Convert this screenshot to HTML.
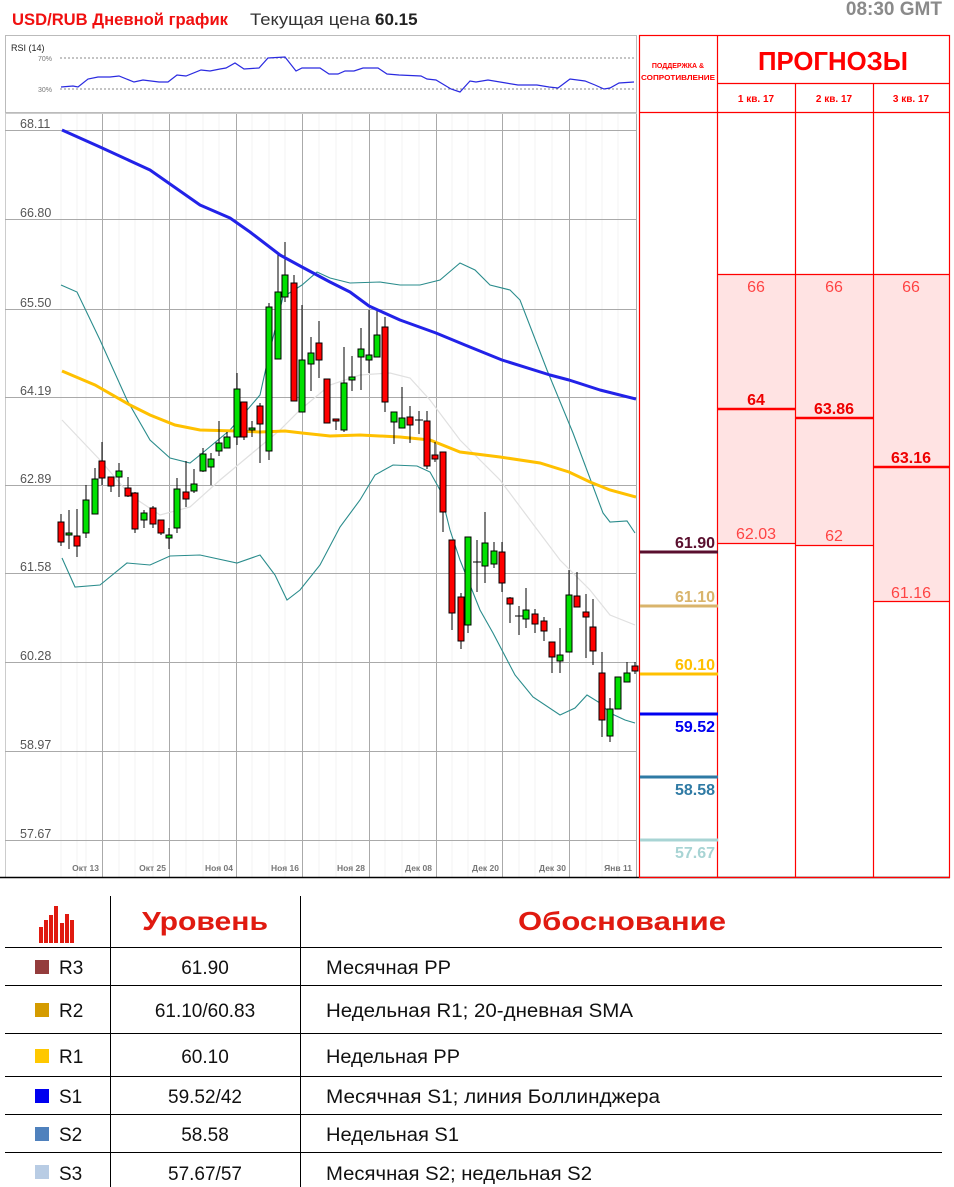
<!DOCTYPE html>
<html><head><meta charset="utf-8"><style>
body{margin:0;background:#fff;width:954px;height:1187px;overflow:hidden}
svg{display:block;font-family:"Liberation Sans","Noto Sans CJK SC",sans-serif}
</style></head><body>
<svg width="954" height="1187" viewBox="0 0 954 1187" xmlns="http://www.w3.org/2000/svg">
<text x="12" y="25" font-size="17" font-weight="bold" fill="#f01010" textLength="216" lengthAdjust="spacingAndGlyphs">USD/RUB Дневной график</text>
<text x="250" y="25" font-size="17" fill="#333" textLength="120" lengthAdjust="spacingAndGlyphs">Текущая цена</text>
<text x="375" y="25" font-size="17" font-weight="bold" fill="#222">60.15</text>
<text x="942" y="15" font-size="19" font-weight="bold" fill="#8a8a8a" text-anchor="end">08:30 GMT</text>

<rect x="5.5" y="35.5" width="631" height="77" fill="#fff" stroke="#bbb"/>
<text x="11" y="51" font-size="9" fill="#222">RSI (14)</text>
<text x="38" y="61" font-size="7" fill="#777">70%</text>
<text x="38" y="92" font-size="7" fill="#777">30%</text>
<line x1="60" y1="58" x2="636" y2="58" stroke="#888" stroke-dasharray="2,2"/>
<line x1="60" y1="89" x2="636" y2="89" stroke="#888" stroke-dasharray="2,2"/>
<polyline fill="none" stroke="#2a2ae0" stroke-width="1.2" points="61,87 73,86 78,87 88,79 98,77 110,77 119,76 134,82 143,80 159,82 168,82 177,75 186,76 201,70 210,71 220,69 226,68 235,63 244,69 259,68 268,58 285,57 296,71 302,68 320,68 329,74 338,74 345,71 354,71 363,68 378,68 387,74 399,75 421,76 427,79 436,80 451,89 460,92 470,81 476,82 488,80 506,83 518,85 537,85 549,87 558,88 570,79 585,81 595,85 604,89 610,88 619,83 634,82"/>

<rect x="5.5" y="113.5" width="631" height="764" fill="#fff" stroke="#ccc"/>
<g stroke="#f3f3f3">
<line x1="61" y1="114" x2="61" y2="877"/><line x1="77" y1="114" x2="77" y2="877"/><line x1="86" y1="114" x2="86" y2="877"/><line x1="119" y1="114" x2="119" y2="877"/><line x1="135" y1="114" x2="135" y2="877"/><line x1="153" y1="114" x2="153" y2="877"/><line x1="186" y1="114" x2="186" y2="877"/><line x1="203" y1="114" x2="203" y2="877"/><line x1="219" y1="114" x2="219" y2="877"/><line x1="252" y1="114" x2="252" y2="877"/><line x1="269" y1="114" x2="269" y2="877"/><line x1="285" y1="114" x2="285" y2="877"/><line x1="319" y1="114" x2="319" y2="877"/><line x1="336" y1="114" x2="336" y2="877"/><line x1="352" y1="114" x2="352" y2="877"/><line x1="385" y1="114" x2="385" y2="877"/><line x1="402" y1="114" x2="402" y2="877"/><line x1="419" y1="114" x2="419" y2="877"/><line x1="452" y1="114" x2="452" y2="877"/><line x1="468" y1="114" x2="468" y2="877"/><line x1="485" y1="114" x2="485" y2="877"/><line x1="519" y1="114" x2="519" y2="877"/><line x1="535" y1="114" x2="535" y2="877"/><line x1="552" y1="114" x2="552" y2="877"/><line x1="586" y1="114" x2="586" y2="877"/><line x1="602" y1="114" x2="602" y2="877"/><line x1="618" y1="114" x2="618" y2="877"/>
</g>
<g stroke="#aaa">
<line x1="5" y1="130.5" x2="636" y2="130.5"/><line x1="5" y1="219.5" x2="636" y2="219.5"/><line x1="5" y1="309.5" x2="636" y2="309.5"/><line x1="5" y1="397.5" x2="636" y2="397.5"/><line x1="5" y1="485.5" x2="636" y2="485.5"/><line x1="5" y1="573.5" x2="636" y2="573.5"/><line x1="5" y1="662.5" x2="636" y2="662.5"/><line x1="5" y1="751.5" x2="636" y2="751.5"/><line x1="5" y1="840.5" x2="636" y2="840.5"/>
<line x1="102.5" y1="114" x2="102.5" y2="877"/><line x1="169.5" y1="114" x2="169.5" y2="877"/><line x1="236.5" y1="114" x2="236.5" y2="877"/><line x1="302.5" y1="114" x2="302.5" y2="877"/><line x1="369.5" y1="114" x2="369.5" y2="877"/><line x1="436.5" y1="114" x2="436.5" y2="877"/><line x1="502.5" y1="114" x2="502.5" y2="877"/><line x1="569.5" y1="114" x2="569.5" y2="877"/><line x1="636.5" y1="114" x2="636.5" y2="877"/>
</g>
<g font-size="12.5" fill="#555">
<text x="20" y="128">68.11</text><text x="20" y="217">66.80</text><text x="20" y="307">65.50</text><text x="20" y="395">64.19</text><text x="20" y="483">62.89</text><text x="20" y="571">61.58</text><text x="20" y="660">60.28</text><text x="20" y="749">58.97</text><text x="20" y="838">57.67</text>
</g>
<g font-size="8.5" font-weight="bold" fill="#777" text-anchor="end">
<text x="99" y="871">Окт 13</text><text x="166" y="871">Окт 25</text><text x="233" y="871">Ноя 04</text><text x="299" y="871">Ноя 16</text><text x="365" y="871">Ноя 28</text><text x="432" y="871">Дек 08</text><text x="499" y="871">Дек 20</text><text x="566" y="871">Дек 30</text><text x="632" y="871">Янв 11</text>
</g>
<line x1="0" y1="877.5" x2="950" y2="877.5" stroke="#000" stroke-width="1.5"/>

<polyline fill="none" stroke="#e0e0e0" stroke-width="1.2" points="62,420 100,460 130,495 160,515 190,507 220,480 250,455 280,430 300,410 330,385 360,375 390,373 410,378 430,400 460,440 500,480 530,520 560,560 590,590 610,615 635,625"/>
<polyline fill="none" stroke="#2a8c8c" stroke-width="1.1" points="61,285 77,292 100,340 127,400 150,440 170,458 190,463 200,455 230,430 260,395 270,350 283,297 302,285 317,272 330,278 350,283 380,282 400,285 420,285 440,280 460,263 475,270 490,285 510,290 520,300 547,370 573,433 603,513 610,522 627,521 635,533"/>
<polyline fill="none" stroke="#2a8c8c" stroke-width="1.1" points="62,558 75,587 100,585 127,563 150,565 170,556 200,555 237,563 260,555 275,575 287,600 300,590 320,565 340,527 360,500 375,475 393,465 417,466 430,472 440,490 450,530 460,560 480,610 493,633 515,675 533,697 560,715 575,708 587,695 600,703 610,713 625,720 635,723"/>
<polyline fill="none" stroke="#ffc000" stroke-width="3" points="62,371 95,385 130,405 150,415 175,425 200,430 236,431 260,432 285,431 302,433 330,436 360,435 400,437 430,440 460,452 500,457 540,463 569,472 590,482 610,490 636,497"/>

<g stroke="#000" stroke-width="1">
<path d="M61 514V546M69 510V549M77 509V557M86 485V538M95 468V514M102 442V485M111 477V492M119 463V497M128 477V497M135 492V533M144 510V528M153 506V528M161 520V535M169 528V549M177 478V533M186 461V507M194 469V493M203 448V472M211 453V485M219 421V456M227 432V448M237 373V445M244 402V440M252 421V437M260 403V463M269 303V460M278 255V359M285 242V302M294 275V401M302 305V412M311 337V391M319 321V378M327 379V423M336 419V430M344 347V432M352 356V391M361 328V390M369 310V373M377 309V357M385 317V412M394 412V444M402 387V428M410 406V443M419 411V434M427 411V469M435 442V462M443 452V532M452 540V630M461 593V649M468 537V633M477 540V592M485 512V583M494 542V568M502 542V592M510 597V623M519 606V635M526 588V628M535 609V633M544 617V641M552 642V673M560 628V673M569 570V652M577 572V607M586 594V658M593 599V665M602 652V737M610 698V742M618 677V709M627 662V682M635 662V674M473 562H481M515 616H523M415 420H423"/>
</g>
<g stroke="#000" stroke-width="1">
<g fill="#f00">
<rect x="58" y="522" width="6" height="20"/><rect x="74" y="536" width="6" height="10"/><rect x="99" y="461" width="6" height="17"/><rect x="108" y="477" width="6" height="9"/><rect x="125" y="488" width="6" height="8"/><rect x="132" y="493" width="6" height="36"/><rect x="150" y="508" width="6" height="16"/><rect x="158" y="520" width="6" height="13"/><rect x="183" y="492" width="6" height="7"/><rect x="241" y="402" width="6" height="35"/><rect x="257" y="406" width="6" height="18"/><rect x="291" y="283" width="6" height="118"/><rect x="316" y="343" width="6" height="17"/><rect x="324" y="379" width="6" height="44"/><rect x="333" y="419" width="6" height="2"/><rect x="382" y="327" width="6" height="75"/><rect x="407" y="417" width="6" height="8"/><rect x="424" y="421" width="6" height="45"/><rect x="432" y="455" width="6" height="4"/><rect x="440" y="452" width="6" height="60"/><rect x="449" y="540" width="6" height="73"/><rect x="458" y="597" width="6" height="44"/><rect x="499" y="552" width="6" height="31"/><rect x="507" y="598" width="6" height="6"/><rect x="532" y="614" width="6" height="10"/><rect x="541" y="621" width="6" height="10"/><rect x="549" y="642" width="6" height="15"/><rect x="574" y="596" width="6" height="11"/><rect x="583" y="612" width="6" height="5"/><rect x="590" y="627" width="6" height="24"/><rect x="599" y="673" width="6" height="47"/><rect x="632" y="666" width="6" height="5"/>
</g>
<g fill="#00e000">
<rect x="66" y="533" width="6" height="2"/><rect x="83" y="500" width="6" height="33"/><rect x="92" y="479" width="6" height="35"/><rect x="116" y="471" width="6" height="6"/><rect x="141" y="513" width="6" height="7"/><rect x="166" y="535" width="6" height="3"/><rect x="174" y="489" width="6" height="39"/><rect x="191" y="484" width="6" height="7"/><rect x="200" y="454" width="6" height="17"/><rect x="208" y="459" width="6" height="8"/><rect x="216" y="443" width="6" height="8"/><rect x="224" y="437" width="6" height="11"/><rect x="234" y="389" width="6" height="48"/><rect x="249" y="428" width="6" height="2"/><rect x="266" y="307" width="6" height="144"/><rect x="275" y="292" width="6" height="67"/><rect x="282" y="275" width="6" height="22"/><rect x="299" y="360" width="6" height="52"/><rect x="308" y="353" width="6" height="11"/><rect x="341" y="383" width="6" height="47"/><rect x="349" y="377" width="6" height="3"/><rect x="358" y="349" width="6" height="8"/><rect x="366" y="355" width="6" height="5"/><rect x="374" y="335" width="6" height="22"/><rect x="391" y="412" width="6" height="10"/><rect x="399" y="418" width="6" height="10"/><rect x="465" y="537" width="6" height="88"/><rect x="482" y="543" width="6" height="23"/><rect x="491" y="551" width="6" height="13"/><rect x="523" y="610" width="6" height="9"/><rect x="557" y="655" width="6" height="6"/><rect x="566" y="595" width="6" height="57"/><rect x="607" y="709" width="6" height="27"/><rect x="615" y="677" width="6" height="32"/><rect x="624" y="673" width="6" height="9"/>
</g>
</g>
<polyline fill="none" stroke="#2222e8" stroke-width="3" stroke-linejoin="round" points="62,130 100,147 150,170 200,205 230,218 250,232 280,255 302,267 330,282 350,292 369,306 400,320 436,333 465,345 502,360 550,375 569,380 600,390 636,399"/>

<rect x="718" y="274" width="232" height="270" fill="#ffe3e3"/>
<rect x="796" y="544" width="77" height="1" fill="#ffe3e3"/>
<rect x="873" y="544" width="77" height="57" fill="#ffe3e3"/>
<g stroke="#f00" stroke-width="1.2" fill="none">
<rect x="639.5" y="35.5" width="310" height="842"/>
<line x1="717.5" y1="35" x2="717.5" y2="878"/>
<line x1="717" y1="83.5" x2="950" y2="83.5"/>
<line x1="639" y1="112.5" x2="950" y2="112.5"/>
<line x1="795.5" y1="83" x2="795.5" y2="878"/>
<line x1="873.5" y1="83" x2="873.5" y2="878"/>
<line x1="718" y1="274.5" x2="950" y2="274.5"/>
<line x1="718" y1="543.5" x2="796" y2="543.5"/>
<line x1="796" y1="545.5" x2="873" y2="545.5"/>
<line x1="873" y1="601.5" x2="950" y2="601.5"/>
</g>
<g stroke="#f00" stroke-width="2.5">
<line x1="718" y1="409" x2="796" y2="409"/><line x1="796" y1="418" x2="873" y2="418"/><line x1="873" y1="467" x2="950" y2="467"/>
</g>
<text x="678" y="68" font-size="7" font-weight="bold" fill="#f00" text-anchor="middle">ПОДДЕРЖКА &amp;</text>
<text x="678" y="80" font-size="7" font-weight="bold" fill="#f00" text-anchor="middle" textLength="74" lengthAdjust="spacingAndGlyphs">СОПРОТИВЛЕНИЕ</text>
<text x="833" y="70" font-size="26" font-weight="bold" fill="#f00" text-anchor="middle" textLength="150" lengthAdjust="spacingAndGlyphs">ПРОГНОЗЫ</text>
<g font-size="10" font-weight="bold" fill="#f00" text-anchor="middle">
<text x="756" y="102">1 кв. 17</text><text x="834" y="102">2 кв. 17</text><text x="911" y="102">3 кв. 17</text>
</g>
<g font-size="16" fill="#f44" text-anchor="middle">
<text x="756" y="292">66</text><text x="834" y="292">66</text><text x="911" y="292">66</text>
<text x="756" y="539">62.03</text><text x="834" y="541">62</text><text x="911" y="598">61.16</text>
</g>
<g font-size="16" font-weight="bold" fill="#e00" text-anchor="middle">
<text x="756" y="405">64</text><text x="834" y="414">63.86</text><text x="911" y="463">63.16</text>
</g>
<g stroke-width="3">
<line x1="640" y1="552" x2="718" y2="552" stroke="#5a0f2e"/>
<line x1="640" y1="606" x2="718" y2="606" stroke="#d9b46c"/>
<line x1="640" y1="674" x2="718" y2="674" stroke="#ffc000"/>
<line x1="640" y1="714" x2="718" y2="714" stroke="#0000f0"/>
<line x1="640" y1="777" x2="718" y2="777" stroke="#2f7aa4"/>
<line x1="640" y1="840" x2="718" y2="840" stroke="#a8d4d4"/>
</g>
<g font-size="16" font-weight="bold" text-anchor="end">
<text x="715" y="548" fill="#5a0f2e">61.90</text>
<text x="715" y="602" fill="#d9b46c">61.10</text>
<text x="715" y="670" fill="#ffc000">60.10</text>
<text x="715" y="732" fill="#0000f0">59.52</text>
<text x="715" y="795" fill="#2f7aa4">58.58</text>
<text x="715" y="858" fill="#a8d4d4">57.67</text>
</g>

<g fill="#e01a10">
<rect x="39" y="927" width="4" height="16"/><rect x="44" y="920" width="4" height="23"/><rect x="49" y="915" width="4" height="28"/><rect x="54" y="906" width="4" height="37"/><rect x="60" y="923" width="4" height="20"/><rect x="65" y="914" width="4" height="29"/><rect x="70" y="920" width="4" height="23"/>
</g>
<g stroke="#000" stroke-width="1">
<line x1="110.5" y1="896" x2="110.5" y2="1187"/><line x1="300.5" y1="896" x2="300.5" y2="1187"/>
<line x1="5" y1="947.5" x2="942" y2="947.5"/><line x1="5" y1="985.5" x2="942" y2="985.5"/><line x1="5" y1="1033.5" x2="942" y2="1033.5"/><line x1="5" y1="1076.5" x2="942" y2="1076.5"/><line x1="5" y1="1114.5" x2="942" y2="1114.5"/><line x1="5" y1="1152.5" x2="942" y2="1152.5"/>
</g>
<text x="205" y="930" font-size="26" font-weight="bold" fill="#e01a10" text-anchor="middle" textLength="126" lengthAdjust="spacingAndGlyphs">Уровень</text>
<text x="622" y="930" font-size="26" font-weight="bold" fill="#e01a10" text-anchor="middle" textLength="208" lengthAdjust="spacingAndGlyphs">Обоснование</text>
<rect x="35" y="960" width="14" height="14" fill="#943c3c"/>
<rect x="35" y="1003" width="14" height="14" fill="#d49b00"/>
<rect x="35" y="1049" width="14" height="14" fill="#ffc800"/>
<rect x="35" y="1089" width="14" height="14" fill="#0000f0"/>
<rect x="35" y="1127" width="14" height="14" fill="#4f81bd"/>
<rect x="35" y="1165" width="14" height="14" fill="#b8cce4"/>
<g font-size="19" fill="#111">
<text x="59" y="974">R3</text><text x="59" y="1017">R2</text><text x="59" y="1063">R1</text><text x="59" y="1103">S1</text><text x="59" y="1141">S2</text><text x="59" y="1180">S3</text>
</g>
<g font-size="19" fill="#111" text-anchor="middle">
<text x="205" y="974">61.90</text><text x="205" y="1017">61.10/60.83</text><text x="205" y="1063">60.10</text><text x="205" y="1103">59.52/42</text><text x="205" y="1141">58.58</text><text x="205" y="1180">57.67/57</text>
</g>
<g font-size="19" fill="#111">
<text x="326" y="974" textLength="125" lengthAdjust="spacingAndGlyphs">Месячная PP</text>
<text x="326" y="1017" textLength="307" lengthAdjust="spacingAndGlyphs">Недельная R1; 20-дневная SMA</text>
<text x="326" y="1063" textLength="134" lengthAdjust="spacingAndGlyphs">Недельная PP</text>
<text x="326" y="1103" textLength="334" lengthAdjust="spacingAndGlyphs">Месячная S1; линия Боллинджера</text>
<text x="326" y="1141" textLength="133" lengthAdjust="spacingAndGlyphs">Недельная S1</text>
<text x="326" y="1180" textLength="266" lengthAdjust="spacingAndGlyphs">Месячная S2; недельная S2</text>
</g>
</svg>
</body></html>
